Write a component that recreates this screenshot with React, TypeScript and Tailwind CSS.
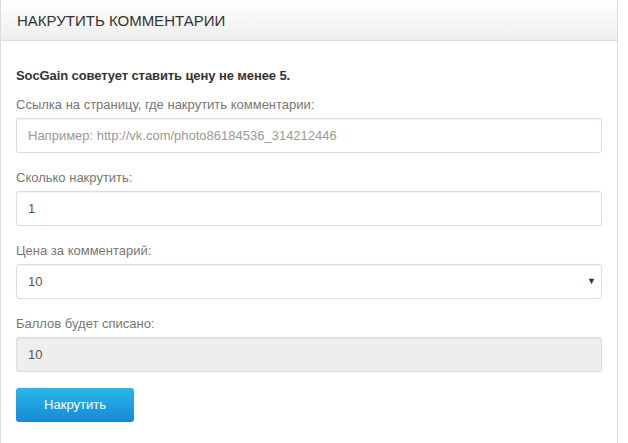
export default function App() {
  const font = { fontFamily: '"Liberation Sans", Arial, sans-serif' };
  const inputCls =
    "mt-[4px] h-[35px] w-full shrink-0 rounded-[3px] border border-[#dddddd] px-[11px] text-[13px] text-[#555] shadow-[inset_0_1px_1px_rgba(0,0,0,0.06),0_0_2px_rgba(0,0,0,0.06)] outline-none";
  const labelCls = "mt-[16px] text-[13px] text-[#777] leading-[18px]";
  return (
    <div className="w-[628px] h-[443px] bg-white overflow-hidden" style={font}>
      <div className="w-[618px] h-[443px] border-x border-[#dcdcdc] flex flex-col">
        <div className="h-[41px] shrink-0 border-b border-[#dcdcdc] bg-gradient-to-b from-[#ffffff] to-[#eeeeee] flex items-center px-[16px]">
          <h1 className="text-[15px] text-[#333] uppercase leading-none">Накрутить комментарии</h1>
        </div>
        <div className="px-[15px] pt-[26px] flex flex-col">
          <p className="text-[13px] font-bold text-[#333] leading-[18px] tracking-[-0.1px]">SocGain советует ставить цену не менее 5.</p>
          <label className="mt-[11px] text-[13px] text-[#777] leading-[18px]">Ссылка на страницу, где накрутить комментарии:</label>
          <input
            className={inputCls + " placeholder:text-[#999]"}
            placeholder="Например: http://vk.com/photo86184536_314212446"
          />
          <label className={labelCls}>Сколько накрутить:</label>
          <input className={inputCls} defaultValue="1" />
          <label className={labelCls}>Цена за комментарий:</label>
          <div className="mt-[4px] h-[35px] w-full shrink-0 rounded-[3px] border border-[#dddddd] px-[11px] text-[13px] text-[#555] flex items-center justify-between shadow-[inset_0_1px_1px_rgba(0,0,0,0.06),0_0_2px_rgba(0,0,0,0.06)]">
            <span>10</span>
            <span className="text-[9px] text-[#333] -mr-[6px]">▼</span>
          </div>
          <label className={labelCls}>Баллов будет списано:</label>
          <input className={inputCls + " bg-[#eeeeee]"} defaultValue="10" disabled />
          <div className="mt-[16px]">
            <button className="h-[34px] w-[118px] rounded-[3px] bg-gradient-to-b from-[#2ab7ec] to-[#1689d4] text-white text-[13px]">
              Накрутить
            </button>
          </div>
        </div>
      </div>
    </div>
  );
}
